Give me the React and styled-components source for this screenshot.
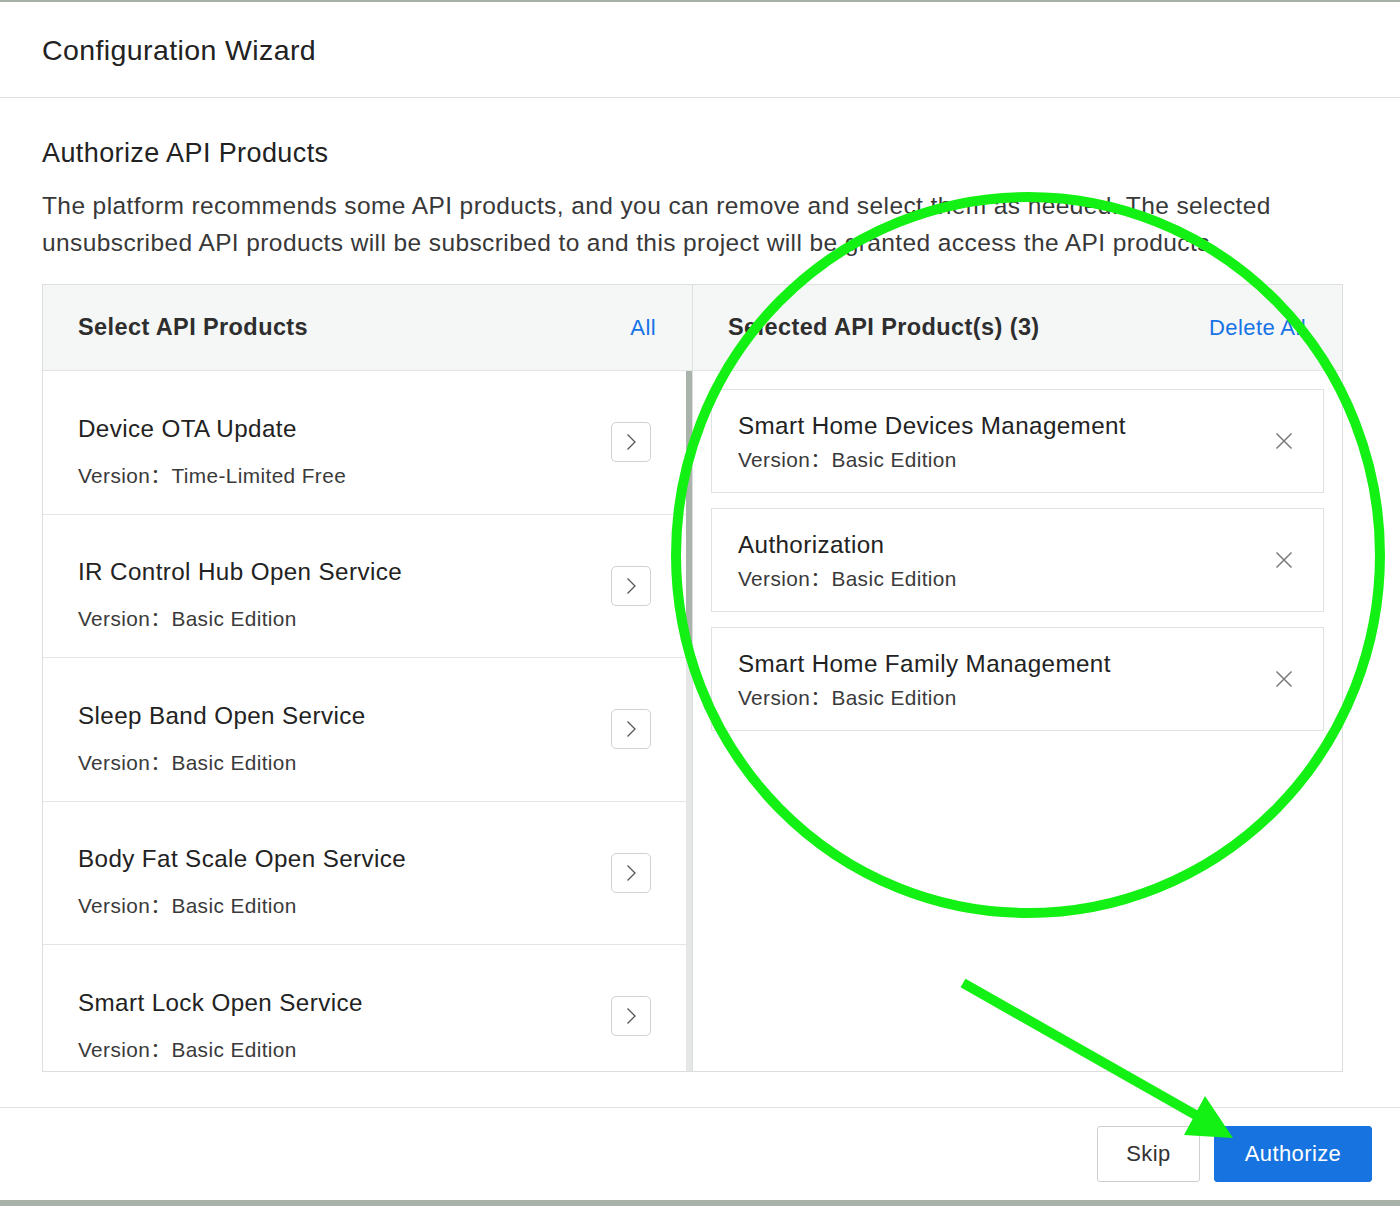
import React from 'react'
import styled, { createGlobalStyle } from 'styled-components'

const GlobalStyle = createGlobalStyle`
  html, body {
    margin: 0;
    padding: 0;
    background: #fff;
  }
  body {
    font-family: 'Liberation Sans', Helvetica, Arial, 'Noto Sans CJK SC', sans-serif;
    letter-spacing: 0.025em;
    color: #333;
  }
`

const Frame = styled.div`
  position: relative;
  width: 1400px;
  height: 1206px;
  box-sizing: border-box;
  border-top: 2px solid #a7afa9;
  border-bottom: 6px solid #a9b1ab;
  display: flex;
  flex-direction: column;
  background: #fff;
`

const Header = styled.div`
  height: 95px;
  padding: 0 42px;
  display: flex;
  align-items: center;
  border-bottom: 1px solid #dde1df;
  flex-shrink: 0;
`

const Title = styled.h1`
  margin: 0;
  padding-top: 1px;
  font-size: 28.5px;
  font-weight: 400;
  color: #222;
`

const Body = styled.div`
  flex: 1;
  padding: 40px 42px 0 42px;
  display: flex;
  flex-direction: column;
`

const SectionTitle = styled.h2`
  margin: 0;
  font-size: 27px;
  line-height: 30px;
  font-weight: 400;
  color: #222;
`

const Description = styled.p`
  margin: 19px 0 0;
  font-size: 24.5px;
  line-height: 37px;
  color: #383838;
`

const Transfer = styled.div`
  margin-top: 23px;
  width: 1301px;
  height: 788px;
  box-sizing: border-box;
  border: 1px solid #dcdfdd;
  display: flex;
`

const Panel = styled.div`
  width: ${(p) => p.$width}px;
  display: flex;
  flex-direction: column;
  border-right: ${(p) => (p.$divider ? '1px solid #dcdfdd' : 'none')};
  box-sizing: border-box;
`

const PanelHead = styled.div`
  height: 86px;
  flex-shrink: 0;
  box-sizing: border-box;
  background: #f5f6f6;
  border-bottom: 1px solid #e1e4e2;
  display: flex;
  align-items: center;
  justify-content: space-between;
  padding: 0 36px 0 35px;
`

const PanelTitle = styled.span`
  font-size: 23.5px;
  font-weight: 700;
  color: #2e2e2e;
`

const LinkText = styled.span`
  font-size: 22px;
  color: #1673e6;
  cursor: pointer;
`

const ListArea = styled.div`
  flex: 1;
  display: flex;
  overflow: hidden;
`

const List = styled.div`
  flex: 1;
  overflow: hidden;
`

const Item = styled.div`
  height: 143.5px;
  box-sizing: border-box;
  border-bottom: 1px solid #e3e5e4;
  display: flex;
  align-items: center;
  justify-content: space-between;
  padding: 0 35px 0 35px;
`

const ItemText = styled.div`
  display: flex;
  flex-direction: column;
  gap: 21px;
  padding-top: 18px;
`

const ItemName = styled.div`
  font-size: 24.2px;
  line-height: 28px;
  color: #222;
`

const Version = styled.div`
  font-size: 20.8px;
  line-height: 24px;
  color: #3a3a3a;
`

const ArrowButton = styled.button`
  width: 40px;
  height: 40px;
  padding: 0;
  border: 1px solid #cfd3d1;
  border-radius: 5px;
  background: #fff;
  display: flex;
  align-items: center;
  justify-content: center;
  cursor: pointer;
`

const ScrollTrack = styled.div`
  width: 6px;
  background: #e4e7e5;
  flex-shrink: 0;
`

const ScrollThumb = styled.div`
  height: 285px;
  background: #aab2ac;
`

const SelectedList = styled.div`
  flex: 1;
  padding: 18px 18px;
  display: flex;
  flex-direction: column;
  gap: 15px;
`

const Card = styled.div`
  height: 104px;
  box-sizing: border-box;
  border: 1px solid #dfe2e0;
  display: flex;
  align-items: center;
  justify-content: space-between;
  padding: 0 30px 0 26px;
`

const CardText = styled.div`
  display: flex;
  flex-direction: column;
  gap: 8px;
  margin-top: 2px;
`

const RemoveButton = styled.button`
  border: none;
  background: none;
  padding: 0;
  width: 18px;
  height: 18px;
  cursor: pointer;
`

const Footer = styled.div`
  margin-top: 35px;
  border-top: 1px solid #dde1df;
  flex: 1;
  display: flex;
  align-items: center;
  justify-content: flex-end;
  gap: 14px;
  padding: 0 28px 0 0;
  margin-left: -42px;
  margin-right: -42px;
`

const Button = styled.button`
  height: 56px;
  min-width: ${(p) => (p.$primary ? 158 : 103)}px;
  padding: 0 24px;
  border-radius: 3px;
  font-family: inherit;
  letter-spacing: inherit;
  font-size: 22px;
  cursor: pointer;
  border: 1px solid ${(p) => (p.$primary ? '#1673e0' : '#ccd0ce')};
  background: ${(p) => (p.$primary ? '#1673e0' : '#fff')};
  color: ${(p) => (p.$primary ? '#fff' : '#333')};
`

const Annotation = styled.svg`
  position: absolute;
  left: 0;
  top: -2px;
  pointer-events: none;
`

const Chevron = () => (
  <svg width="16" height="20" viewBox="0 0 16 20">
    <path d="M4.5 2.5 L12 10 L4.5 17.5" fill="none" stroke="#555" strokeWidth="1.3" />
  </svg>
)

const Cross = () => (
  <svg width="18" height="18" viewBox="0 0 18 18">
    <path d="M1.5 1.5 L16.5 16.5 M16.5 1.5 L1.5 16.5" fill="none" stroke="#7a7a7a" strokeWidth="1.5" />
  </svg>
)

const available = [
  { name: 'Device OTA Update', version: 'Time-Limited Free' },
  { name: 'IR Control Hub Open Service', version: 'Basic Edition' },
  { name: 'Sleep Band Open Service', version: 'Basic Edition' },
  { name: 'Body Fat Scale Open Service', version: 'Basic Edition' },
  { name: 'Smart Lock Open Service', version: 'Basic Edition' },
]

const selected = [
  { name: 'Smart Home Devices Management', version: 'Basic Edition' },
  { name: 'Authorization', version: 'Basic Edition' },
  { name: 'Smart Home Family Management', version: 'Basic Edition' },
]

export default function App() {
  return (
    <>
      <GlobalStyle />
      <Frame>
        <Header>
          <Title>Configuration Wizard</Title>
        </Header>
        <Body>
          <SectionTitle>Authorize API Products</SectionTitle>
          <Description>
            The platform recommends some API products, and you can remove and
            select them as needed. The selected unsubscribed API products will
            be subscribed to and this project will be granted access the API
            products.
          </Description>
          <Transfer>
            <Panel $width={650} $divider>
              <PanelHead>
                <PanelTitle>Select API Products</PanelTitle>
                <LinkText>All</LinkText>
              </PanelHead>
              <ListArea>
                <List>
                  {available.map((p) => (
                    <Item key={p.name}>
                      <ItemText>
                        <ItemName>{p.name}</ItemName>
                        <Version>Version：{p.version}</Version>
                      </ItemText>
                      <ArrowButton>
                        <Chevron />
                      </ArrowButton>
                    </Item>
                  ))}
                </List>
                <ScrollTrack>
                  <ScrollThumb />
                </ScrollTrack>
              </ListArea>
            </Panel>
            <Panel $width={649}>
              <PanelHead>
                <PanelTitle>Selected API Product(s) (3)</PanelTitle>
                <LinkText>Delete All</LinkText>
              </PanelHead>
              <SelectedList>
                {selected.map((p) => (
                  <Card key={p.name}>
                    <CardText>
                      <ItemName>{p.name}</ItemName>
                      <Version>Version：{p.version}</Version>
                    </CardText>
                    <RemoveButton>
                      <Cross />
                    </RemoveButton>
                  </Card>
                ))}
              </SelectedList>
            </Panel>
          </Transfer>
          <Footer>
            <Button>Skip</Button>
            <Button $primary>Authorize</Button>
          </Footer>
        </Body>
        <Annotation width="1400" height="1206" viewBox="0 0 1400 1206">
          <ellipse cx="1028" cy="555" rx="352" ry="358" fill="none" stroke="#13f013" strokeWidth="10" />
          <line x1="963" y1="983" x2="1208" y2="1122" stroke="#13f013" strokeWidth="10" />
          <polygon points="1205,1096 1184,1135 1233,1138" fill="#13f013" />
        </Annotation>
      </Frame>
    </>
  )
}
